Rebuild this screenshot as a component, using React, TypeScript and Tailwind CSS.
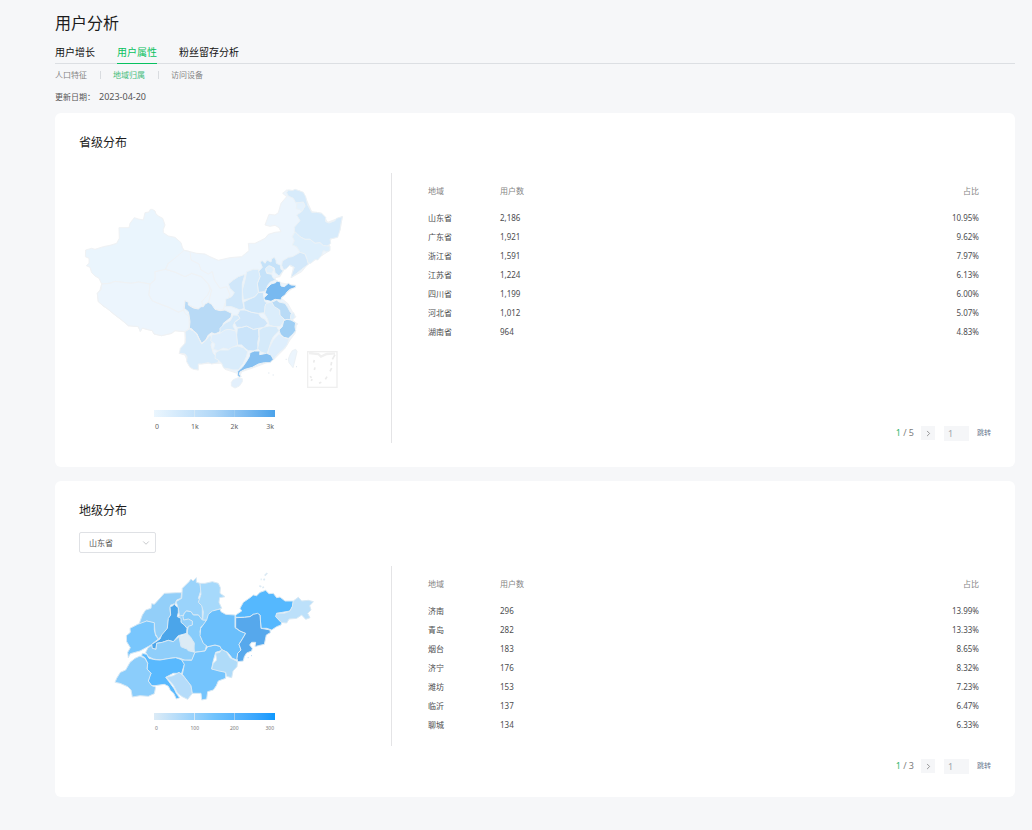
import React, { useState } from "react";
import { ChevronDown, ChevronRight } from "lucide-react";

type Region = { name: string; fill: string; points: string };
type Row = { area: string; users: string; percent: string };

const mainTabs = ["用户增长", "用户属性", "粉丝留存分析"];
const subTabs = ["人口特征", "地域归属", "访问设备"];

const provinceRows: Row[] = [
  { area: "山东省", users: "2,186", percent: "10.95%" },
  { area: "广东省", users: "1,921", percent: "9.62%" },
  { area: "浙江省", users: "1,591", percent: "7.97%" },
  { area: "江苏省", users: "1,224", percent: "6.13%" },
  { area: "四川省", users: "1,199", percent: "6.00%" },
  { area: "河北省", users: "1,012", percent: "5.07%" },
  { area: "湖南省", users: "964", percent: "4.83%" },
];

const cityRows: Row[] = [
  { area: "济南", users: "296", percent: "13.99%" },
  { area: "青岛", users: "282", percent: "13.33%" },
  { area: "烟台", users: "183", percent: "8.65%" },
  { area: "济宁", users: "176", percent: "8.32%" },
  { area: "潍坊", users: "153", percent: "7.23%" },
  { area: "临沂", users: "137", percent: "6.47%" },
  { area: "聊城", users: "134", percent: "6.33%" },
];

// North and west
const westRegions: Region[] = [
  {
    name: "base",
    fill: "#ecf5fd",
    points:
      "327,211 345,215 365,220 390,222 405,230 430,241 465,233 500,230 512,220 522,212 520,190 540,190 556,182 570,175 580,163 600,157 618,155 612,143 600,136 585,139 570,135 582,103 600,105 610,98 618,70 635,50 623,40 635,30 675,33 690,50 710,95 740,100 758,127 802,110 795,150 783,172 765,178 762,213 735,230 720,240 698,253 680,275 650,292 655,262 640,255 628,265 615,290 600,293 602,300 615,308 662,317 640,335 620,355 625,360 638,370 652,395 662,410 652,420 665,430 660,460 645,480 630,505 595,540 570,550 530,565 500,575 495,588 487,580 450,568 440,550 400,550 370,552 370,570 345,562 330,525 313,520 330,490 330,455 300,452 290,460 260,467 237,462 232,452 215,448 202,444 196,454 190,440 160,437 140,420 120,405 97,386 85,378 70,365 67,340 75,330 80,312 225,300 280,240",
  },
  {
    name: "新疆",
    fill: "#eaf5fd",
    points:
      "232,88 240,93 243,102 250,108 263,115 270,135 265,148 265,158 280,168 300,172 318,188 322,202 327,211 320,225 303,232 295,240 280,250 272,268 258,274 240,275 243,288 240,300 225,312 190,306 170,310 150,308 120,304 105,310 80,312 72,295 60,288 50,278 45,262 34,257 42,250 42,235 31,230 32,210 50,205 60,208 85,200 105,196 125,190 133,175 132,143 162,143 165,130 178,113 190,117 205,120 210,98 222,96 226,88",
  },
  { name: "西藏", fill: "#ecf5fd", points: "80,312 105,310 120,304 150,308 170,310 190,306 225,312 222,345 232,362 250,370 282,382 310,396 326,390 330,400 342,410 343,445 330,455 300,452 290,460 260,467 237,462 232,452 215,448 202,444 196,454 190,440 160,437 140,420 120,405 97,386 85,378 70,365 67,340 78,330" },
  { name: "青海", fill: "#ecf5fd", points: "240,275 272,268 300,276 330,290 350,280 380,290 400,312 405,330 398,345 380,365 385,380 370,387 340,375 330,362 326,390 310,396 282,382 250,370 232,362 222,345 225,312 240,300" },
  { name: "甘肃", fill: "#ecf5fd", points: "327,211 345,215 348,240 372,252 378,270 400,282 412,275 418,300 435,325 455,320 465,345 450,370 445,390 420,390 400,370 410,330 400,312 380,290 350,280 330,290 300,276 272,268 280,250 303,232" },
  { name: "四川", fill: "#b8daf6", points: "330,362 340,367 340,375 355,384 370,387 378,380 385,380 390,372 400,367 410,373 420,388 435,392 450,390 470,400 468,412 445,430 442,445 435,455 420,462 410,458 400,465 392,480 380,490 373,477 365,460 355,452 350,446 343,445 345,425 342,405 340,395 328,385" },
  { name: "云南", fill: "#d9ecfb", points: "343,447 355,453 365,462 373,479 380,492 392,482 405,465 415,480 408,495 415,520 430,535 430,548 410,552 400,548 380,552 370,552 370,570 355,568 345,562 335,545 336,530 330,522 313,520 316,505 330,490 332,478 330,455" },
];

const northRegions: Region[] = [
  { name: "黑龙江", fill: "#d7ebfb", points: "245,38 250,30 262,32 270,28 285,33 295,37 302,50 308,75 320,97 335,97 350,100 362,112 362,125 372,129 390,122 395,115 412,110 408,130 405,150 398,172 375,177 377,190 365,200 355,197 345,188 330,190 315,178 300,178 285,170 268,155 268,142 285,122 275,105 290,95 300,78 295,67 272,68 265,55 250,48" },
  { name: "加格达奇", fill: "#e5f2fd", points: "276,69 295,66 300,78 290,95 284,88 274,86" },
  { name: "吉林", fill: "#deeffc", points: "270,155 285,170 300,178 315,178 330,190 345,188 355,197 375,198 375,212 365,215 355,212 350,226 338,240 330,238 318,250 308,248 300,222 285,217 275,200 262,195 268,182 262,170" },
  { name: "辽宁", fill: "#d3e8fa", points: "232,243 250,232 262,230 285,217 300,222 306,238 310,253 290,268 275,280 258,293 262,278 268,262 255,255 244,266 236,270 230,256" },
  { name: "河北", fill: "#c5e2f9", points: "165,245 172,242 180,250 186,240 198,246 200,236 208,232 213,240 214,250 226,255 228,268 235,272 222,288 210,278 208,264 195,258 182,268 185,280 200,283 203,292 212,300 195,307 188,316 184,327 178,335 160,337 157,310 165,290 160,275 172,262" },
  { name: "北京", fill: "#deeffc", points: "182,265 192,257 202,262 206,270 200,280 185,278" },
  { name: "山西", fill: "#d7ebfb", points: "125,275 145,268 160,268 165,290 157,310 160,337 150,350 132,356 115,360 112,330 120,300" },
  { name: "陕西", fill: "#d0e7fa", points: "85,300 100,290 120,283 112,310 112,330 112,360 118,385 105,390 80,380 62,380 62,358 80,350 88,338 75,325 70,312" },
  { name: "山东", fill: "#78b9f0", points: "180,340 185,325 198,312 212,308 215,303 226,306 228,318 238,320 250,310 258,315 272,316 272,322 255,328 246,336 240,345 230,352 228,360 210,358 198,364 180,360 175,355 188,343" },
];

const southRegions: Region[] = [
  { name: "重庆", fill: "#d5eafb", points: "45,145 60,130 76,122 85,105 98,106 105,115 90,125 84,138 92,152 68,148 58,155 45,160" },
  { name: "贵州", fill: "#deeefc", points: "20,165 45,160 60,150 72,148 92,153 95,165 98,195 70,208 55,204 40,212 25,208 30,192 17,182" },
  { name: "广西", fill: "#d9ecfb", points: "32,218 45,210 70,210 80,202 98,198 115,203 128,215 124,230 115,250 100,270 84,270 70,266 56,264 50,250 40,240 30,235" },
  { name: "湖南", fill: "#cae4fa", points: "97,145 110,142 125,138 145,148 160,145 162,170 158,188 160,208 145,213 130,212 120,205 110,195 98,195 95,165" },
  { name: "湖北", fill: "#cfe6fa", points: "105,90 120,90 140,97 160,100 168,112 180,118 188,130 178,142 160,145 145,148 125,138 110,142 95,142 88,128 105,115 98,104" },
  { name: "河南", fill: "#cbe5fa", points: "116,66 132,58 150,50 160,38 175,37 176,50 180,65 192,70 180,78 182,98 160,100 140,97 118,88" },
  { name: "安徽", fill: "#dbedfb", points: "182,72 192,68 205,65 212,78 222,85 225,105 238,112 236,125 225,140 208,140 192,135 188,118 178,100 180,80" },
  { name: "江苏", fill: "#b9dbf6", points: "200,67 215,60 222,66 240,70 248,82 255,95 264,105 258,118 240,120 225,106 224,90 208,80" },
  { name: "上海", fill: "#deeffc", points: "258,102 266,98 270,112 262,120 256,115" },
  { name: "浙江", fill: "#a0cff4", points: "236,122 246,118 258,120 272,128 270,140 272,152 264,162 250,175 236,172 226,162 222,150 232,140" },
  { name: "江西", fill: "#d5eafa", points: "162,150 175,142 192,138 215,140 222,152 205,170 198,185 192,205 186,222 165,215 158,205 163,180" },
  { name: "福建", fill: "#deeefc", points: "222,162 236,172 252,178 246,195 235,208 222,218 203,240 196,225 188,222 192,205 205,180" },
  { name: "广东", fill: "#86c0f1", points: "148,213 165,213 164,224 185,220 198,225 205,238 195,248 178,248 160,252 142,262 120,268 105,276 103,284 109,289 102,292 97,285 98,274 112,262 124,245 133,230 135,218" },
  { name: "海南", fill: "#e3f0fc", points: "85,299 100,293 112,296 112,305 103,318 90,324 79,318 79,307" },
  { name: "台湾", fill: "#ecf5fd", points: "262,212 272,208 276,215 270,240 264,263 252,248 250,237 256,222" },
];

const cityRegionsWest: Region[] = [
  { name: "德州", fill: "#93cff9", points: "103,175 112,150 122,135 138,130 140,116 148,118 178,85 215,83 230,83 228,100 215,105 210,118 197,120 195,132 197,150 190,165 187,190 175,208 160,222 150,205 148,175 125,168 112,176" },
  { name: "滨州", fill: "#9ad3fb", points: "232,70 252,50 258,42 264,48 274,38 274,52 285,55 288,75 280,100 292,112 292,165 280,150 265,150 258,140 245,138 238,144 238,155 224,156 220,130 213,110 230,100" },
  { name: "东营", fill: "#a6d9fb", points: "285,55 300,55 322,50 340,55 346,68 345,85 360,95 344,98 342,112 350,130 325,138 316,148 310,165 293,166 295,140 290,122 280,112 288,88" },
  { name: "聊城", fill: "#78c6fd", points: "75,190 98,178 125,168 148,173 148,195 152,212 160,222 138,240 105,258 76,266 70,278 68,262 76,248 65,230 64,212 76,202" },
  { name: "邹平", fill: "#94d0fb", points: "220,154 238,150 258,160 264,170 262,182 250,186 245,190 228,174 226,160" },
  { name: "淄博", fill: "#87ccfb", points: "238,144 245,138 258,140 265,150 280,150 292,165 304,166 300,178 288,185 285,200 290,220 305,240 300,258 268,262 266,232 248,212 247,198 250,184 262,180 262,168 250,162 236,165 234,155" },
  { name: "济南", fill: "#4ba5ea", points: "207,115 212,122 220,128 220,142 217,155 228,160 228,172 238,180 246,190 245,205 220,212 205,230 190,226 172,232 155,235 153,253 140,250 140,238 150,232 165,222 170,210 187,190 190,160 197,150 195,125 204,122" },
  { name: "莱芜", fill: "#dcebf5", points: "222,215 235,212 245,205 256,215 268,235 265,258 250,257 245,252 228,245" },
  { name: "泰安", fill: "#8fcefa", points: "122,262 128,250 140,240 142,250 153,253 155,235 172,232 190,226 205,230 222,215 228,245 245,252 250,257 270,262 262,285 240,286 225,280 210,278 195,280 165,285 145,282 130,275" },
  { name: "济宁", fill: "#59b9fe", points: "112,265 125,268 132,280 150,284 165,285 195,280 212,278 230,284 240,294 236,305 230,325 205,325 182,337 192,350 208,372 214,385 224,398 214,402 206,385 196,376 190,364 178,358 150,362 140,362 130,350 132,334 138,325 126,312 128,295 120,278 110,272" },
  { name: "菏泽", fill: "#8bcdfb", points: "105,273 120,280 128,295 126,312 138,325 130,348 140,362 152,366 148,386 130,394 105,392 82,396 78,375 68,365 45,355 30,352 35,340 46,322 62,315 75,292 90,280" },
  { name: "枣庄", fill: "#b5dcfa", points: "184,337 205,332 222,322 232,330 245,345 258,362 262,385 248,403 232,395 218,385 205,360" },
];

const cityRegionsEast: Region[] = [
  { name: "临沂", fill: "#74c4fd", points: "-30,262 0,258 8,245 30,240 45,244 52,256 32,262 24,290 20,312 42,315 62,322 62,340 40,348 34,362 25,375 8,380 5,402 -10,405 -12,385 -38,385 -42,362 -68,328 -62,298 -70,285 -40,286" },
  { name: "潍坊", fill: "#6abffc", points: "5,165 10,148 22,138 45,132 48,140 62,148 90,150 90,188 105,198 122,205 112,222 102,238 108,255 98,265 96,285 82,280 68,262 50,254 45,244 30,240 8,245 -5,235 -15,212 -13,190" },
  { name: "烟台", fill: "#55b8fe", points: "92,150 110,138 105,130 115,112 135,98 145,90 155,92 165,82 182,76 192,86 205,85 215,98 225,96 240,108 265,108 262,125 255,138 215,145 213,155 230,172 228,180 215,185 200,195 185,190 168,190 165,150 145,148 135,155 118,157 92,157" },
  { name: "青岛", fill: "#56a8ec", points: "92,158 118,157 135,155 145,148 158,145 165,150 168,190 180,192 195,195 196,203 184,210 178,238 160,242 150,245 152,232 140,232 134,240 142,250 140,258 125,264 118,275 115,288 98,290 96,280 98,265 108,255 102,238 112,222 122,205 105,198 92,188" },
  { name: "威海", fill: "#bce0fa", points: "212,155 215,145 238,145 255,138 262,125 265,108 280,97 290,108 310,106 325,110 314,122 318,135 308,145 315,158 302,163 290,150 275,160 252,162 245,174 228,172" },
  { name: "日照", fill: "#afdbf9", points: "32,265 45,262 50,253 65,262 75,278 98,290 96,305 84,318 80,338 65,334 62,322 42,318 20,312 25,295 35,285" },
];

const Regions = ({ list, stroke }: { list: Region[]; stroke: string }) => (
  <>
    {list.map((region) => (
      <polygon key={region.name} points={region.points} fill={region.fill} stroke={stroke} strokeWidth={3} strokeLinejoin="round" />
    ))}
  </>
);

const ChinaMap = () => (
  <svg viewBox="12 0 828 660" className="block h-[220px] w-[276px]" aria-hidden="true">
    <Regions list={westRegions} stroke="#f0f2f4" />
    <g transform="translate(390 0)">
      <Regions list={northRegions} stroke="#ecf2f6" />
    </g>
    <g transform="translate(390 300)">
      <Regions list={southRegions} stroke="#ecf2f6" />
      {/* South China Sea inset */}
      <rect x="308" y="215" width="88" height="107" fill="none" stroke="#efefef" strokeWidth="4" />
      <path d="M312 219 340 222 348 230 365 222 390 220" fill="none" stroke="#f0f0f0" strokeWidth="7" />
      <path d="M390 224 382 238M380 246 378 256M380 264 375 274M366 290 361 298M349 307 342 310M319 303 321 297M319 294 316 288M328 270 330 262M326 248 328 240" fill="none" stroke="#ebebeb" strokeWidth="5" />
      <path d="M190 279h3M203 285h3M242 238h3M273 260h3M275 132h3" stroke="#e3ebf1" strokeWidth="4" />
    </g>
  </svg>
);

const ShandongMap = () => (
  <svg viewBox="0 3 660 417" className="block h-[139px] w-[220px]" aria-hidden="true">
    <Regions list={cityRegionsWest} stroke="#d8e9f5" />
    <g transform="translate(300 0)">
      <Regions list={cityRegionsEast} stroke="#d8e9f5" />
      <path d="M163 62l6 3M172 68l5-2M176 46l3-5M167 43h3M179 32l8-8" stroke="#dceaf4" strokeWidth="5" />
      <path d="M138 272h3M128 278h3" stroke="#b9daf3" strokeWidth="3" />
    </g>
  </svg>
);

const DataTable = ({ rows }: { rows: Row[] }) => (
  <table className="w-full table-fixed text-[8px] text-[#4c4d4f]">
    <thead>
      <tr className="h-[35px] text-left align-middle text-[#858585]">
        <th className="w-[72px] p-0 font-normal">地域</th>
        <th className="p-0 font-normal">用户数</th>
        <th className="p-0 text-right font-normal">占比</th>
      </tr>
    </thead>
    <tbody>
      {rows.map((row) => (
        <tr key={row.area} className="h-[19px]">
          <td className="p-0">{row.area}</td>
          <td className="p-0">{row.users}</td>
          <td className="p-0 text-right">{row.percent}</td>
        </tr>
      ))}
    </tbody>
  </table>
);

const Pagination = ({ total }: { total: number }) => {
  const [page, setPage] = useState(1);
  const [target, setTarget] = useState("1");

  // Go to the typed page when it is in range
  const handleJump = () => {
    const value = Number(target);
    if (value >= 1 && value <= total) setPage(value);
  };

  return (
    <div className="mt-auto -mr-3 flex h-4 items-center justify-end text-[9px] text-[#7c7c7c]">
      <span className="mr-[7px] whitespace-pre">
        <span className="text-[#2fb56a]">{page}</span> / {total}
      </span>
      <button
        aria-label="Next page"
        onClick={() => setPage(Math.min(total, page + 1))}
        className="mr-[9px] flex size-[14px] items-center justify-center bg-[#f5f6f8] text-[#777]"
      >
        <ChevronRight size={9} strokeWidth={2} />
      </button>
      <input
        aria-label="Page"
        value={target}
        onChange={(e) => setTarget(e.target.value)}
        className="mr-2 h-[15px] w-[25px] bg-[#f5f6f8] px-1 text-[#a0a4aa] outline-none"
      />
      <button onClick={handleJump} className="text-[7px] text-[#6a7890]">
        跳转
      </button>
    </div>
  );
};

const Legend = ({ bar, labels, labelClass }: { bar: string; labels: string[]; labelClass: string }) => (
  <div className="w-[121px]">
    <div className={`flex h-[7px] ${bar}`}>
      <span className="w-[41px] border-r border-[#d5e8f6]" />
      <span className="w-10 border-r border-[#9fcdf2]" />
    </div>
    <div className={`grid grid-cols-[20px_1fr_1fr_20px] px-px text-center ${labelClass}`}>
      {labels.map((label) => (
        <span key={label} className="first:text-left last:text-right">
          {label}
        </span>
      ))}
    </div>
  </div>
);

const App = () => {
  const [province, setProvince] = useState("山东省");

  return (
    <div className="min-h-screen bg-[#f6f7f9] pt-[11px] pr-[17px] pb-8 pl-[55px] font-['Noto_Sans','Noto_Sans_CJK_SC',sans-serif]">
      <h1 className="text-base leading-6 text-[#1c1c1c]">用户分析</h1>
      <nav className="mt-2 flex h-[21px] gap-[22px] border-b border-[#dcdfe3] text-[10px] leading-[18px] text-[#111]">
        {mainTabs.map((tab) => (
          <a key={tab} href="#" className={tab === "用户属性" ? "h-[21px] border-b border-[#07c160] text-[#07c160]" : "h-[21px]"}>
            {tab}
          </a>
        ))}
      </nav>
      <nav className="mt-[7px] flex h-2 divide-x divide-[#d9dce0] text-[8px] leading-2 text-[#858585]">
        {subTabs.map((tab) => (
          <a key={tab} href="#" className={tab === "地域归属" ? "pr-[13px] pl-3 text-[#45bd7c]" : "pr-[13px] pl-3 first:pl-0"}>
            {tab}
          </a>
        ))}
      </nav>
      <p className="mt-3 flex gap-1 text-[8px] leading-3 text-[#555]">
        <span>更新日期：</span>
        <span className="text-[9px]">2023-04-20</span>
      </p>

      <section className="mt-[10px] rounded-md bg-white px-6 pt-[21px] pb-6">
        <h2 className="text-xs leading-[18px] text-[#1c1c1c]">省级分布</h2>
        <div className="mt-[21px] flex">
          <div className="w-[312px] shrink-0 pt-[7px]">
            <ChinaMap />
            <div className="mt-[10px] pl-[75px]">
              <Legend
                bar="bg-linear-to-r from-[#ebf6fe] via-[#b0d7f7] to-[#4aa2ea]"
                labels={["0", "1k", "2k", "3k"]}
                labelClass="mt-1 text-[7px] leading-3 text-[#666]"
              />
            </div>
          </div>
          <div className="h-[270px] w-px shrink-0 bg-[#e4e4e6]" />
          <div className="flex h-[268px] grow flex-col pr-3 pl-9">
            <DataTable rows={provinceRows} />
            <Pagination total={5} />
          </div>
        </div>
      </section>

      <section className="mt-[14px] rounded-md bg-white px-6 pt-[21px] pb-[23px]">
        <h2 className="text-xs leading-[18px] text-[#1c1c1c]">地级分布</h2>
        <div className="relative mt-3 w-[77px]">
          <select
            aria-label="省份"
            value={province}
            onChange={(e) => setProvince(e.target.value)}
            className="block h-[21px] w-full appearance-none rounded-xs border border-[#dfe1e5] bg-white pl-[9px] text-[8px] text-[#555] outline-none"
          >
            {provinceRows.map((row) => (
              <option key={row.area}>{row.area}</option>
            ))}
          </select>
          <ChevronDown size={10} strokeWidth={1.5} className="pointer-events-none absolute top-[6px] right-[5px] text-[#a5a8ad]" />
        </div>
        <div className="mt-[13px] flex">
          <div className="w-[312px] shrink-0">
            <div className="pl-[26px]">
              <ShandongMap />
            </div>
            <div className="mt-2 pl-[75px]">
              <Legend
                bar="bg-linear-to-r from-[#dcebf6] via-[#70c3fd] to-[#0a98fd]"
                labels={["0", "100", "200", "300"]}
                labelClass="mt-[3px] text-[5px] leading-2.5 text-[#777]"
              />
            </div>
          </div>
          <div className="h-[180px] w-px shrink-0 bg-[#e4e4e6]" />
          <div className="flex h-[208px] grow flex-col pr-3 pl-9">
            <DataTable rows={cityRows} />
            <Pagination total={3} />
          </div>
        </div>
      </section>
    </div>
  );
};

export default App;
